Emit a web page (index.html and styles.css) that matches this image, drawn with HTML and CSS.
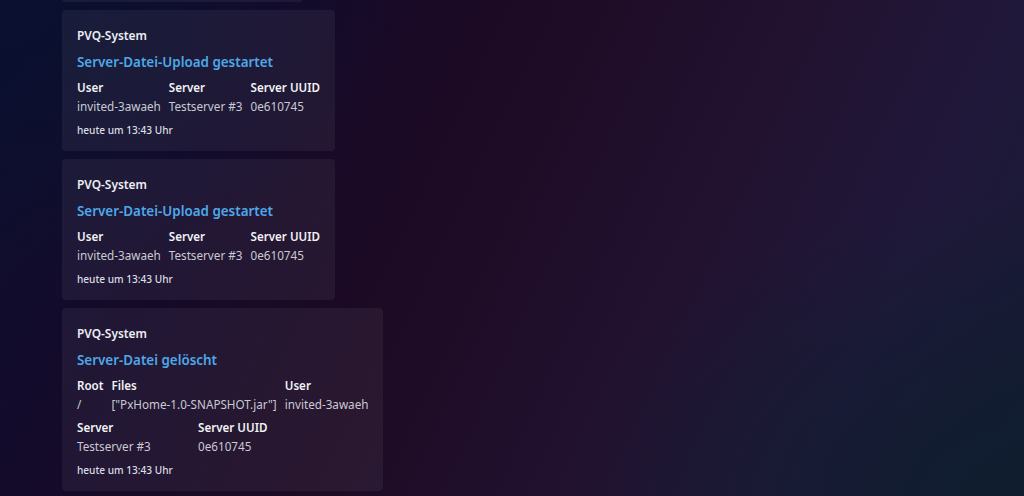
FILE: index.html
```html
<!DOCTYPE html>
<html lang="de">
<head>
<meta charset="utf-8">
<title>PVQ-System</title>
<link rel="stylesheet" href="styles.css">
</head>
<body>
<main class="feed">
  <div class="embed stub"></div>

  <article class="embed">
    <div class="author">PVQ-System</div>
    <div class="title">Server-Datei-Upload gestartet</div>
    <div class="fields">
      <div class="field"><div class="name">User</div><div class="value">invited-3awaeh</div></div>
      <div class="field"><div class="name">Server</div><div class="value">Testserver #3</div></div>
      <div class="field"><div class="name">Server UUID</div><div class="value">0e610745</div></div>
    </div>
    <div class="time">heute um 13:43 Uhr</div>
  </article>

  <article class="embed">
    <div class="author">PVQ-System</div>
    <div class="title">Server-Datei-Upload gestartet</div>
    <div class="fields">
      <div class="field"><div class="name">User</div><div class="value">invited-3awaeh</div></div>
      <div class="field"><div class="name">Server</div><div class="value">Testserver #3</div></div>
      <div class="field"><div class="name">Server UUID</div><div class="value">0e610745</div></div>
    </div>
    <div class="time">heute um 13:43 Uhr</div>
  </article>

  <article class="embed">
    <div class="author">PVQ-System</div>
    <div class="title">Server-Datei gelöscht</div>
    <div class="fields">
      <div class="field"><div class="name">Root</div><div class="value">/</div></div>
      <div class="field"><div class="name">Files</div><div class="value">["PxHome-1.0-SNAPSHOT.jar"]</div></div>
      <div class="field"><div class="name">User</div><div class="value">invited-3awaeh</div></div>
    </div>
    <div class="fields fields-pair">
      <div class="field"><div class="name">Server</div><div class="value">Testserver #3</div></div>
      <div class="field"><div class="name">Server UUID</div><div class="value">0e610745</div></div>
    </div>
    <div class="time">heute um 13:43 Uhr</div>
  </article>
</main>
</body>
</html>
```

FILE: styles.css
```css
html, body {
  margin: 0;
  padding: 0;
  height: 100%;
}

body {
  font-family: "Noto Sans", "Open Sans", sans-serif;
  color: #f2f3f5;
  overflow: hidden;
  background:
    radial-gradient(ellipse 45% 60% at 100% 100%, rgba(14, 30, 46, 0.9) 0%, rgba(14, 30, 46, 0) 100%),
    radial-gradient(ellipse 40% 55% at 0% 0%, rgba(10, 16, 48, 0.9) 0%, rgba(10, 16, 48, 0) 100%),
    linear-gradient(115deg, #0d0f2e 0%, #150a2a 22%, #1d0a24 42%, #221230 65%, #20183a 82%, #161a33 100%);
}

.feed {
  display: flex;
  flex-direction: column;
  align-items: flex-start;
  gap: 8px;
  padding-left: 62px;
}

.embed {
  background: rgba(255, 255, 255, 0.055);
  border-radius: 4px;
  padding: 17px 15px 14px 15px;
  display: flex;
  flex-direction: column;
}

.stub {
  width: 240px;
  height: 2px;
  padding: 0;
  border-radius: 0 0 4px 4px;
}

.author {
  font-size: 11.9px;
  font-weight: 600;
  line-height: 16px;
  color: #eceef2;
}

.title {
  margin-top: 9px;
  font-size: 13.4px;
  font-weight: 600;
  line-height: 20px;
  color: #4ea8e8;
}

.fields {
  margin-top: 7px;
  display: grid;
  grid-template-columns: repeat(3, auto);
  justify-content: start;
  column-gap: 8px;
}

.fields-pair {
  margin-top: 6px;
  grid-template-columns: 113px auto;
}

.name {
  font-size: 11.6px;
  font-weight: 600;
  line-height: 18px;
  color: #f2f3f5;
}

.value {
  font-size: 11.7px;
  line-height: 18px;
  color: #c9cad3;
  white-space: nowrap;
}

.time {
  margin-top: 8px;
  font-size: 10.1px;
  font-weight: 500;
  line-height: 14px;
  color: #dcdde3;
}
```
